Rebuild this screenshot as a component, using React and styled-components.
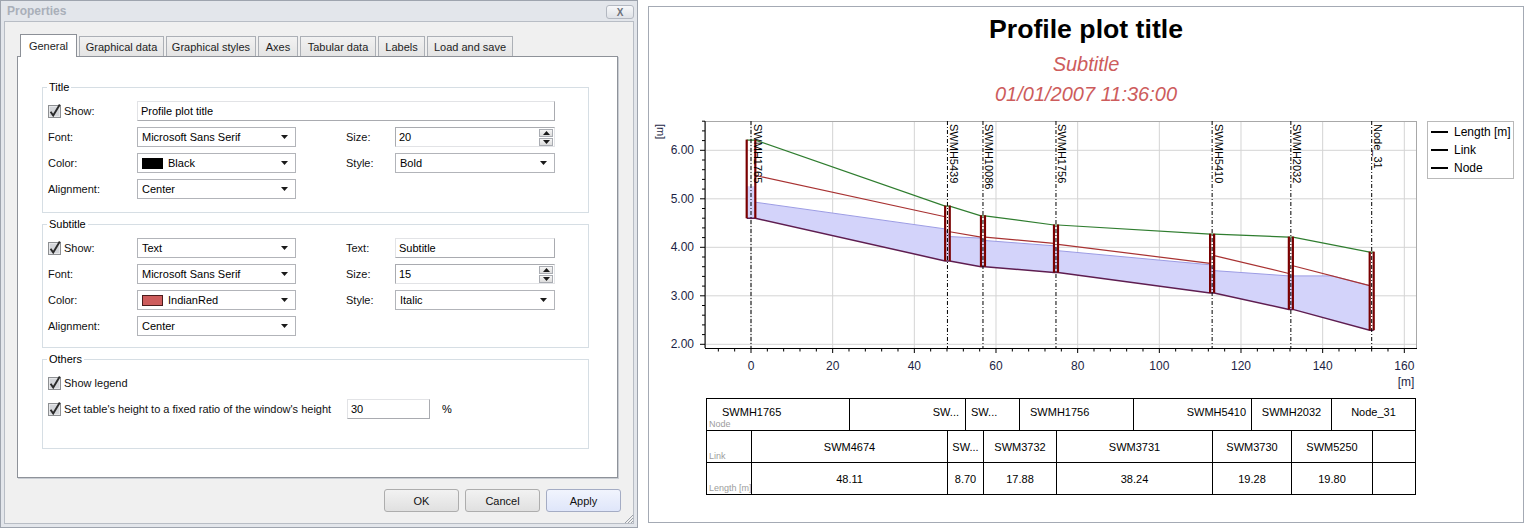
import React from "react";
import styled, { createGlobalStyle } from "styled-components";

const GlobalStyle = createGlobalStyle`
  html, body { margin: 0; padding: 0; background: #fff; }
  body {
    font-family: "Liberation Sans", Arial, sans-serif;
    font-size: 11px;
    color: #000;
  }
`;

const Page = styled.div`
  display: flex;
  align-items: flex-start;
  gap: 10px;
  width: 1526px;
  height: 530px;
`;

//=== dialog frame ===//
const Dialog = styled.div`
  position: relative;
  box-sizing: border-box;
  width: 638px;
  height: 528px;
  display: flex;
  flex-direction: column;
  padding: 0 3px 3px 3px;
  border: 1px solid #9ea4ae;
  background: #e3e6eb;
`;

const TitleBar = styled.div`
  height: 21px;
  display: flex;
  align-items: center;
  justify-content: space-between;
  padding-left: 3px;
`;

const TitleText = styled.span`
  font-size: 12px;
  font-weight: bold;
  color: #a9afb9;
`;

const CloseButton = styled.div`
  box-sizing: border-box;
  width: 28px;
  height: 14px;
  margin-top: 2px;
  border: 1px solid #b3b8c1;
  border-radius: 3px;
  background: linear-gradient(#f7f8fa, #dfe2e7);
  display: flex;
  align-items: center;
  justify-content: center;
  font-size: 10px;
  font-weight: bold;
  color: #6c717a;
`;

const Client = styled.div`
  flex: 1;
  display: flex;
  flex-direction: column;
  padding: 12px 15px 11px 12px;
  border: 1px solid #b8bdc5;
  background: #f0f0f0;
`;

const TabStrip = styled.div`
  display: flex;
  align-items: flex-end;
  gap: 2px;
  height: 22px;
  padding-left: 3px;
`;

const Tab = styled.div`
  position: relative;
  z-index: ${p => (p.$active ? 2 : 1)};
  box-sizing: border-box;
  width: ${p => p.$w}px;
  height: ${p => (p.$active ? 23 : 20)}px;
  margin-bottom: ${p => (p.$active ? -1 : 0)}px;
  display: flex;
  align-items: center;
  justify-content: center;
  border: 1px solid ${p => (p.$active ? "#8c9097" : "#acb0b6")};
  border-bottom: none;
  background: ${p => (p.$active ? "#fff" : "linear-gradient(#f2f2f2, #e4e4e4)")};
  color: #1e1e1e;
  white-space: nowrap;
`;

const TabPanel = styled.div`
  box-sizing: border-box;
  width: 601px;
  height: 422px;
  display: flex;
  flex-direction: column;
  gap: 5px;
  padding: 24px 28px 0 24px;
  border: 1px solid #8e9299;
  box-shadow: 1px 1px 0 #c9cdd3;
  background: #fff;
`;

//=== group boxes and form controls ===//
const Group = styled.fieldset`
  margin: 0;
  min-width: 0;
  padding: 7px 5px ${p => p.$bottom}px 5px;
  border: 1px solid #d6dee4;
`;

const GroupLegend = styled.legend`
  padding: 0 2px;
  margin-left: -1px;
  line-height: 13px;
  font-size: 11px;
`;

const FormGrid = styled.div`
  display: grid;
  grid-template-columns: 89px 159px 50px 49px 160px;
  grid-auto-rows: 20px;
  row-gap: 6px;
`;

const FieldLabel = styled.div`
  grid-column: ${p => p.$col || "auto"};
  display: flex;
  align-items: center;
  color: #111;
`;

const CheckLabel = styled.label`
  display: flex;
  align-items: center;
  gap: 3px;
  color: #111;
`;

const CheckSvg = styled.svg`
  width: 13px;
  height: 13px;
  flex: none;
  overflow: visible;
`;

const CheckBox = () => (
  <CheckSvg viewBox="0 0 13 13">
    <rect x="0.5" y="0.5" width="12" height="12" fill="#e6e7e9" stroke="#8d8f92" />
    <rect x="2" y="2" width="9" height="9" fill="#d4d6da" />
    <path d="M2.6 6.8 L5.2 10.6 L11.8 -0.5" fill="none" stroke="#2b2b2b" strokeWidth="1.9" />
  </CheckSvg>
);

const TextBox = styled.div`
  grid-column: ${p => p.$span || "auto"};
  box-sizing: border-box;
  height: 20px;
  display: flex;
  align-items: center;
  padding-left: 3px;
  border: 1px solid;
  border-color: #e2e3e6 #a9abb0 #a9abb0 #e2e3e6;
  background: #fff;
`;

const ComboBox = styled.div`
  box-sizing: border-box;
  height: 20px;
  display: flex;
  align-items: center;
  gap: 5px;
  padding: 0 7px 0 4px;
  border: 1px solid #b2b4b9;
  background: #fff;
`;

const ComboText = styled.span`
  flex: 1;
`;

const Swatch = styled.span`
  width: 19px;
  height: 9px;
  border: 1px solid ${p => p.$edge};
  background: ${p => p.$color};
`;

const ArrowSvg = styled.svg`
  width: 7px;
  height: 4px;
`;

const Arrow = ({ up }) => (
  <ArrowSvg viewBox="0 0 7 4">
    <path d={up ? "M0 4 L3.5 0 L7 4 Z" : "M0 0 L7 0 L3.5 4 Z"} fill="#1a1a1a" />
  </ArrowSvg>
);

const Combo = ({ swatch, edge, children }) => (
  <ComboBox>
    {swatch && <Swatch $color={swatch} $edge={edge} />}
    <ComboText>{children}</ComboText>
    <Arrow />
  </ComboBox>
);

const SpinBox = styled.div`
  box-sizing: border-box;
  height: 20px;
  display: flex;
  align-items: center;
  padding: 1px 1px 1px 3px;
  border: 1px solid;
  border-color: #a9abb0 #e2e3e6 #e2e3e6 #a9abb0;
  background: #fff;
`;

const SpinButtons = styled.div`
  margin-left: auto;
  display: flex;
  flex-direction: column;
  gap: 1px;
`;

const SpinButton = styled.div`
  box-sizing: border-box;
  width: 14px;
  height: 8px;
  display: flex;
  align-items: center;
  justify-content: center;
  border: 1px solid #a9acb2;
  background: linear-gradient(#f6f6f6, #dcdcdc);
`;

const Spin = ({ value }) => (
  <SpinBox>
    {value}
    <SpinButtons>
      <SpinButton><Arrow up /></SpinButton>
      <SpinButton><Arrow /></SpinButton>
    </SpinButtons>
  </SpinBox>
);

const OthersGrid = styled.div`
  display: grid;
  grid-template-columns: 299px 83px auto;
  grid-auto-rows: 20px;
  row-gap: 6px;
  align-items: center;
`;

const Percent = styled.span`
  padding-left: 12px;
`;

const ButtonRow = styled.div`
  display: flex;
  justify-content: flex-end;
  gap: 6px;
  margin: 11px -3px 0 0;
`;

const DlgButton = styled.div`
  box-sizing: border-box;
  width: 75px;
  height: 23px;
  display: flex;
  align-items: center;
  justify-content: center;
  border: 1px solid ${p => (p.$primary ? "#a4acc4" : "#adadad")};
  border-radius: 3px;
  background: ${p =>
    p.$primary ? "linear-gradient(#f1f4fd, #dfe6fa)" : "linear-gradient(#f2f2f2, #e0e0e0)"};
  color: #111;
`;

const GripSvg = styled.svg`
  position: absolute;
  right: 3px;
  bottom: 3px;
  width: 12px;
  height: 12px;
`;

const tabs = [
  ["General", 57],
  ["Graphical data", 85],
  ["Graphical styles", 90],
  ["Axes", 40],
  ["Tabular data", 76],
  ["Labels", 47],
  ["Load and save", 86],
];

const PropertiesDialog = () => (
  <Dialog>
    <TitleBar>
      <TitleText>Properties</TitleText>
      <CloseButton>X</CloseButton>
    </TitleBar>
    <Client>
      <TabStrip>
        {tabs.map(([t, w], i) => (
          <Tab key={t} $w={w} $active={i === 0}>{t}</Tab>
        ))}
      </TabStrip>
      <TabPanel>
        <Group $bottom={13}>
          <GroupLegend>Title</GroupLegend>
          <FormGrid>
            <CheckLabel><CheckBox />Show:</CheckLabel>
            <TextBox $span="2 / 6">Profile plot title</TextBox>
            <FieldLabel>Font:</FieldLabel>
            <Combo>Microsoft Sans Serif</Combo>
            <FieldLabel $col={4}>Size:</FieldLabel>
            <Spin value="20" />
            <FieldLabel>Color:</FieldLabel>
            <Combo swatch="#000" edge="#000">Black</Combo>
            <FieldLabel $col={4}>Style:</FieldLabel>
            <Combo>Bold</Combo>
            <FieldLabel>Alignment:</FieldLabel>
            <Combo>Center</Combo>
          </FormGrid>
        </Group>
        <Group $bottom={11}>
          <GroupLegend>Subtitle</GroupLegend>
          <FormGrid>
            <CheckLabel><CheckBox />Show:</CheckLabel>
            <Combo>Text</Combo>
            <FieldLabel $col={4}>Text:</FieldLabel>
            <TextBox>Subtitle</TextBox>
            <FieldLabel>Font:</FieldLabel>
            <Combo>Microsoft Sans Serif</Combo>
            <FieldLabel $col={4}>Size:</FieldLabel>
            <Spin value="15" />
            <FieldLabel>Color:</FieldLabel>
            <Combo swatch="#cd5c5c" edge="#4a1c1c">IndianRed</Combo>
            <FieldLabel $col={4}>Style:</FieldLabel>
            <Combo>Italic</Combo>
            <FieldLabel>Alignment:</FieldLabel>
            <Combo>Center</Combo>
          </FormGrid>
        </Group>
        <Group $bottom={29}>
          <GroupLegend>Others</GroupLegend>
          <OthersGrid>
            <CheckLabel><CheckBox />Show legend</CheckLabel>
            <span />
            <span />
            <CheckLabel><CheckBox />Set table's height to a fixed ratio of the window's height</CheckLabel>
            <TextBox>30</TextBox>
            <Percent>%</Percent>
          </OthersGrid>
        </Group>
      </TabPanel>
      <ButtonRow>
        <DlgButton>OK</DlgButton>
        <DlgButton>Cancel</DlgButton>
        <DlgButton $primary>Apply</DlgButton>
      </ButtonRow>
    </Client>
    <GripSvg viewBox="0 0 12 12">
      <path d="M11 3 L3 11 M11 6 L6 11 M11 9 L9 11" stroke="#9aa0a8" strokeWidth="1" />
    </GripSvg>
  </Dialog>
);

//=== profile chart ===//
const ChartPanel = styled.div`
  box-sizing: border-box;
  width: 876px;
  height: 517px;
  margin-top: 6px;
  display: flex;
  flex-direction: column;
  align-items: center;
  padding-top: 7px;
  border: 1px solid #a4aab4;
  background: #fff;
`;

const ChartTitle = styled.div`
  font-size: 26.67px;
  font-weight: bold;
  line-height: 30px;
`;

const ChartSubtitle = styled.div`
  margin-top: ${p => p.$gap}px;
  font-size: 20px;
  font-style: italic;
  line-height: 24px;
  color: #cd5c5c;
`;

const PlotSvg = styled.svg`
  display: block;
  margin-top: 4px;
  width: 874px;
  height: 282px;
  font-family: "Liberation Sans", Arial, sans-serif;
`;

const X0 = 102;
const KX = 4.0833;
const Y0 = 40.3;
const KY = 48.5;
const px = m => X0 + m * KX;
const py = v => Y0 + (6 - v) * KY;

const nodes = [
  { m: 0, hw: 4.3, ground: 6.21, inv: 4.6, name: "SWMH1765" },
  { m: 48.11, hw: 2.3, ground: 4.85, inv: 3.72, name: "SWMH5439" },
  { m: 56.81, hw: 2, ground: 4.65, inv: 3.6, name: "SWMH10086" },
  { m: 74.69, hw: 2, ground: 4.46, inv: 3.48, name: "SWMH1756" },
  { m: 112.93, hw: 2, ground: 4.27, inv: 3.06, name: "SWMH5410" },
  { m: 132.21, hw: 2, ground: 4.21, inv: 2.72, name: "SWMH2032" },
  { m: 152.01, hw: 2, ground: 3.9, inv: 2.29, name: "Node_31" },
];

// crown and water level at start / end of each link
const links = [
  { c: [5.48, 4.63], w: [4.93, 4.38] },
  { c: [4.32, 4.21], w: [4.22, 4.19] },
  { c: [4.21, 4.08], w: [4.14, 4.03] },
  { c: [4.06, 3.67], w: [3.93, 3.64] },
  { c: [3.83, 3.46], w: [3.52, 3.41] },
  { c: [3.62, 3.21], w: [3.41, 3.41] },
];

const L = i => px(nodes[i].m) - nodes[i].hw;
const R = i => px(nodes[i].m) + nodes[i].hw;
const pts = arr => arr.map(([x, y]) => `${x.toFixed(1)},${y.toFixed(1)}`).join(" ");

const PlotArea = () => {
  const top = 11;
  const bottom = 238;
  const left = 56;
  const right = 768;

  // water surface, then invert back
  const water = [[L(0), py(5.26)], [R(0), py(5.26)]];
  links.forEach((l, i) => {
    water.push([R(i), py(l.w[0])]);
    if (i === 5) {
      const frac = (l.c[0] - l.w[0]) / (l.c[0] - l.c[1]);
      water.push([R(i) + frac * (L(i + 1) - R(i)), py(l.w[0])]);
      water.push([L(i + 1), py(l.c[1])]);
    } else {
      water.push([L(i + 1), py(l.w[1])]);
    }
  });
  const invert = [];
  nodes.forEach((n, i) => {
    invert.push([L(i), py(n.inv)], [R(i), py(n.inv)]);
  });
  const ground = [];
  nodes.forEach((n, i) => {
    ground.push([L(i), py(n.ground)], [R(i), py(n.ground)]);
  });
  const fill = [...water, ...invert.slice(0, -1).reverse()];

  const xTicks = [];
  for (let m = -8; m <= 160; m += 4) xTicks.push(m);
  const yTicks = [];
  for (let k = 0; k <= 23; k++) yTicks.push(2 + k * 0.2);

  return (
    <PlotSvg viewBox="0 0 874 282">
      {/* grid */}
      {[0, 20, 40, 60, 80, 100, 120, 140, 160].map(m => (
        <line key={"gx" + m} x1={px(m)} x2={px(m)} y1={top} y2={bottom} stroke="#d4d4d4" />
      ))}
      {[2, 3, 4, 5, 6].map(v => (
        <line key={"gy" + v} x1={left} x2={right} y1={py(v)} y2={py(v)} stroke="#d4d4d4" />
      ))}
      <rect x={left + 0.5} y={top + 0.5} width={right - left - 1} height={bottom - top} fill="none" stroke="#a8a8a8" />

      {/* water */}
      <polygon points={pts(fill)} fill="#d3d3fa" />
      <polyline points={pts(water.slice(2))} fill="none" stroke="#9c9ce4" strokeWidth="1" />

      {/* ground */}
      <polyline points={pts(ground)} fill="none" stroke="#2f7d2f" strokeWidth="1.2" />
      {/* link crowns */}
      {links.map((l, i) => (
        <line key={"c" + i} x1={R(i)} y1={py(l.c[0])} x2={L(i + 1)} y2={py(l.c[1])} stroke="#a83232" strokeWidth="1.2" />
      ))}
      {/* invert */}
      <polyline points={pts(invert)} fill="none" stroke="#5e1d50" strokeWidth="1.5" />

      {/* nodes */}
      {nodes.map((n, i) => (
        <g key={n.name}>
          <line x1={L(i)} x2={L(i)} y1={py(n.inv)} y2={py(n.ground) - 0.5} stroke="#7a0000" strokeWidth="2.2" />
          <line x1={R(i)} x2={R(i)} y1={py(n.inv)} y2={py(n.ground) - 0.5} stroke="#7a0000" strokeWidth="2.2" />
          <line x1={px(n.m)} x2={px(n.m)} y1={top} y2={bottom} stroke="#000" strokeWidth="1" strokeDasharray="4 2 1 2" />
          <text
            transform={`translate(${px(n.m) + 2.5} 14) rotate(90)`}
            fontSize="11"
            fill="#000"
          >
            {n.name}
          </text>
        </g>
      ))}

      {/* axes */}
      <line x1={left} x2={left} y1={top} y2={bottom} stroke="#000" />
      <line x1={left} x2={right} y1={bottom + 0.5} y2={bottom + 0.5} stroke="#000" />
      {xTicks.map(m => (
        <line key={"tx" + m} x1={px(m)} x2={px(m)} y1={bottom} y2={bottom + (m % 20 === 0 ? 5 : 3.5)} stroke="#000" />
      ))}
      {yTicks.map((v, k) => (
        <line key={"ty" + k} x1={k % 5 === 0 ? left - 5 : left - 3} x2={left} y1={py(v)} y2={py(v)} stroke="#000" />
      ))}
      {[2, 3, 4, 5, 6].map(v => (
        <text key={"ly" + v} x={45} y={py(v)} textAnchor="end" dominantBaseline="central" fontSize="12" fill="#1d1f45">
          {v.toFixed(2)}
        </text>
      ))}
      {[0, 20, 40, 60, 80, 100, 120, 140, 160].map(m => (
        <text key={"lx" + m} x={px(m)} y={256} textAnchor="middle" dominantBaseline="central" fontSize="12" fill="#1d1f45">
          {m}
        </text>
      ))}
      <text transform="translate(8 14) rotate(90)" fontSize="11" fill="#1d1f45">[m]</text>
      <text x={757} y={272} textAnchor="middle" dominantBaseline="central" fontSize="12" fill="#1d1f45">[m]</text>

      {/* legend */}
      <rect x="778.5" y="11.5" width="86" height="57" fill="#fff" stroke="#b9b9b9" />
      {["Length [m]", "Link", "Node"].map((t, i) => (
        <g key={t}>
          <line x1="782" x2="799" y1={22 + i * 18} y2={22 + i * 18} stroke="#000" strokeWidth="2" />
          <text x="805" y={22 + i * 18} dominantBaseline="central" fontSize="12" fill="#000">{t}</text>
        </g>
      ))}
    </PlotSvg>
  );
};

//=== tabular data ===//
const DataTable = styled.div`
  align-self: flex-start;
  margin: 6px 0 0 57px;
  box-sizing: border-box;
  width: 710px;
  border: 1px solid #000;
  font-size: 11px;
`;

const TableRow = styled.div`
  display: flex;
  height: 31px;
  border-top: ${p => (p.$first ? "none" : "1px solid #000")};
`;

const Cell = styled.div`
  position: relative;
  box-sizing: border-box;
  flex: ${p => (p.$w ? `0 0 ${p.$w}px` : "1")};
  display: flex;
  align-items: center;
  justify-content: ${p =>
    p.$align === "left" ? "flex-start" : p.$align === "right" ? "flex-end" : "center"};
  padding: 0 ${p => (p.$align === "right" ? p.$pad || 0 : 0)}px ${p => p.$raise || 0}px
    ${p => (p.$align === "left" ? p.$pad || 0 : 0)}px;
  border-left: ${p => (p.$first ? "none" : "1px solid #000")};
  overflow: hidden;
  white-space: nowrap;
`;

const RowCaption = styled.span`
  position: absolute;
  left: 2px;
  bottom: 1px;
  font-size: 9px;
  line-height: 10px;
  color: #9d9d9d;
`;

const nodeRow = [
  { w: 142, text: "SWMH1765", align: "left", pad: 15, caption: "Node" },
  { w: 116, text: "SW...", align: "right", pad: 6 },
  { w: 54, text: "SW...", align: "left", pad: 5 },
  { w: 114, text: "SWMH1756", align: "left", pad: 10 },
  { w: 118, text: "SWMH5410", align: "right", pad: 5 },
  { w: 80, text: "SWMH2032" },
  { text: "Node_31" },
];

const linkWidths = [44, 196, 36, 73, 156, 79, 81, null];
const linkRow = ["", "SWM4674", "SW...", "SWM3732", "SWM3731", "SWM3730", "SWM5250", ""];
const lengthRow = ["", "48.11", "8.70", "17.88", "38.24", "19.28", "19.80", ""];

const ProfileChart = () => (
  <ChartPanel>
    <ChartTitle>Profile plot title</ChartTitle>
    <ChartSubtitle $gap={8}>Subtitle</ChartSubtitle>
    <ChartSubtitle $gap={6}>01/01/2007 11:36:00</ChartSubtitle>
    <PlotArea />
    <DataTable>
      <TableRow $first>
        {nodeRow.map((c, i) => (
          <Cell key={i} $first={i === 0} $w={c.w} $align={c.align} $pad={c.pad} $raise={6}>
            {c.text}
            {c.caption && <RowCaption>{c.caption}</RowCaption>}
          </Cell>
        ))}
      </TableRow>
      {[
        { caption: "Link", cells: linkRow },
        { caption: "Length [m]", cells: lengthRow },
      ].map(row => (
        <TableRow key={row.caption}>
          {row.cells.map((t, i) => (
            <Cell key={i} $first={i === 0} $w={linkWidths[i]}>
              {t}
              {i === 0 && <RowCaption>{row.caption}</RowCaption>}
            </Cell>
          ))}
        </TableRow>
      ))}
    </DataTable>
  </ChartPanel>
);

export default function App() {
  return (
    <>
      <GlobalStyle />
      <Page>
        <PropertiesDialog />
        <ProfileChart />
      </Page>
    </>
  );
}
